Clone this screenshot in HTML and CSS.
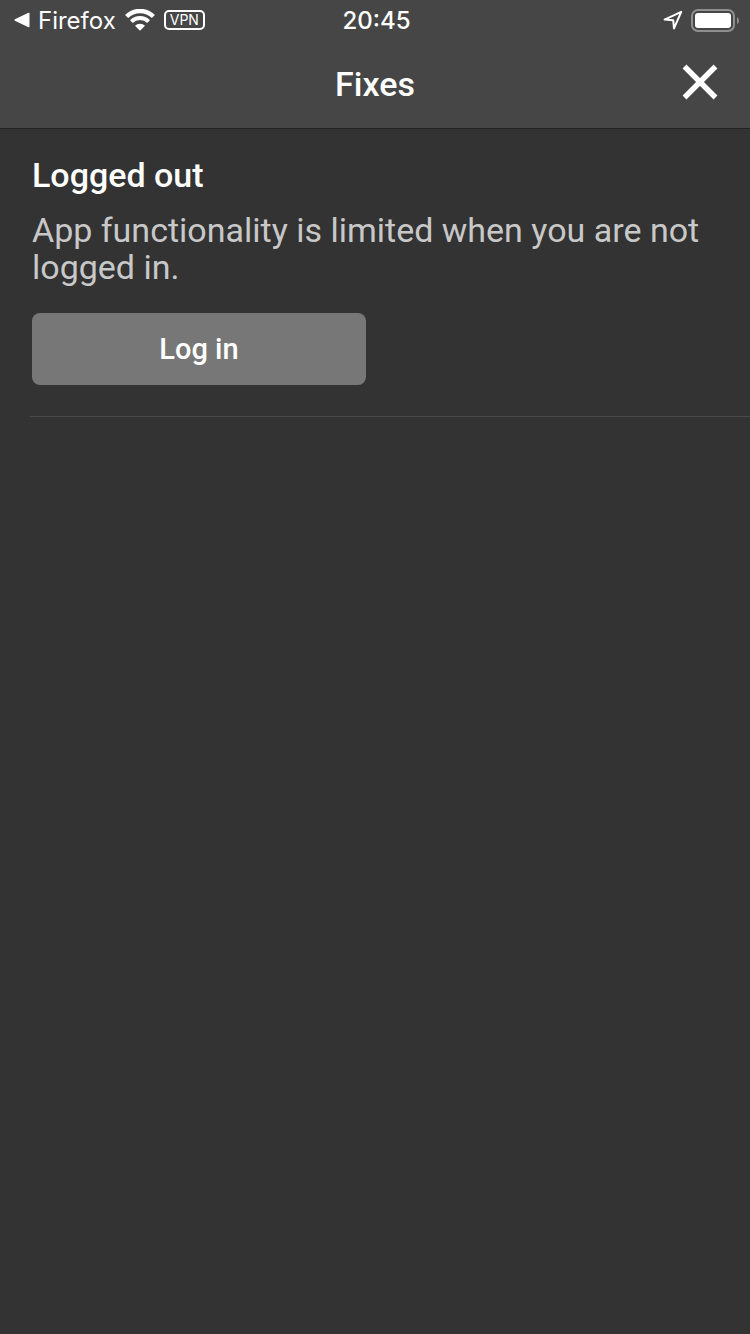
FILE: index.html
```html
<!DOCTYPE html>
<html lang="en">
<head>
  <meta charset="UTF-8">
  <meta name="viewport" content="width=device-width, initial-scale=1.0">
  <title>Fixes</title>
  <link rel="stylesheet" href="styles.css">
</head>
<body>
  <header class="top">
    <div class="status-bar">
      <div class="status-left">
        <a class="back-link" href="#">
          <svg width="16" height="16" viewBox="0 0 16 16" aria-hidden="true">
            <path d="M1.2 8 L14.8 1.4 V14.6 Z" fill="#fff" stroke="#fff" stroke-width="1.4" stroke-linejoin="round"/>
          </svg>
          <span>Firefox</span>
        </a>
        <svg width="30" height="22" viewBox="0 0 30 22" aria-hidden="true">
          <path d="M1.6 7.5 A19 19 0 0 1 28.4 7.5" fill="none" stroke="#fff" stroke-width="4.4"/>
          <path d="M6.4 12.6 A12.2 12.2 0 0 1 23.6 12.6" fill="none" stroke="#fff" stroke-width="4"/>
          <path d="M15 21.8 L10 16.8 A7 7 0 0 1 20 16.8 Z" fill="#fff"/>
        </svg>
        <span class="vpn">VPN</span>
      </div>
      <div class="clock">20:45</div>
      <div class="status-right">
        <svg width="20" height="20" viewBox="0 0 20 20" aria-hidden="true">
          <path d="M1.6 9.6 L18.2 1.8 L11 18.4 L10.2 10.2 Z" fill="none" stroke="#fff" stroke-width="2" stroke-linejoin="round"/>
        </svg>
        <svg width="48" height="23" viewBox="0 0 48 23" aria-hidden="true">
          <rect x="1" y="1" width="42" height="21" rx="6" fill="none" stroke="#8f8f8f" stroke-width="2"/>
          <rect x="4" y="4" width="36" height="15" rx="3" fill="#fff"/>
          <path d="M46 8 Q48 9 48 11.5 Q48 14 46 15 Z" fill="#8f8f8f"/>
        </svg>
      </div>
    </div>
    <div class="nav-bar">
      <h1>Fixes</h1>
      <button class="close" aria-label="Close">
        <svg width="36" height="36" viewBox="0 0 36 36" aria-hidden="true">
          <path d="M2.5 2.5 L33.5 33.5 M33.5 2.5 L2.5 33.5" stroke="#fff" stroke-width="5.4"/>
        </svg>
      </button>
    </div>
  </header>

  <main>
    <section class="fix">
      <h2>Logged out</h2>
      <p>App functionality is limited when you are not logged in.</p>
      <div class="actions">
        <button class="login">Log in</button>
      </div>
    </section>
  </main>
</body>
</html>
```
FILE: styles.css
```css
* {
  box-sizing: border-box;
}
body {
  margin: 0;
  min-height: 100vh;
  background: #333;
  color: #fff;
  font-family: Roboto, sans-serif;
}
svg {
  display: block;
}
h1, h2, p {
  margin: 0;
}
button {
  border: 0;
  color: #fff;
  font-family: inherit;
  cursor: pointer;
}
.top {
  background: #464646;
  border-bottom: 1px solid #222;
}

/* status bar */
.status-bar {
  display: grid;
  grid-template-columns: 1fr auto 1fr;
  align-items: center;
  height: 40px;
  padding: 0 11px 0 14px;
  font-family: Inter, sans-serif;
  font-size: 24px;
}
.status-left,
.status-right,
.back-link {
  display: flex;
  align-items: center;
}
.status-left {
  gap: 9px;
}
.back-link {
  gap: 8px;
  color: #fff;
  text-decoration: none;
}
.vpn {
  height: 20px;
  padding: 0 4px;
  border: 2px solid #fff;
  border-radius: 5px;
  font-size: 14px;
  line-height: 16px;
}
.clock {
  font-weight: 500;
}
.status-right {
  justify-content: flex-end;
  gap: 8px;
}

/* title bar */
.nav-bar {
  display: grid;
  grid-template-columns: 1fr auto 1fr;
  align-items: center;
  height: 88px;
  padding: 0 32px;
}
h1 {
  grid-column: 2;
  font-size: 34px;
  font-weight: 500;
}
.close {
  justify-self: end;
  padding: 0 0 4px;
  background: none;
}

/* fix item */
.fix {
  margin-left: 30px;
  padding: 28px 32px 31px 2px;
  border-bottom: 1px solid #4a4a4a;
}
h2 {
  font-size: 34px;
  font-weight: 500;
  line-height: 37px;
}
p {
  margin-top: 18px;
  color: #c8c8c8;
  font-size: 34px;
  line-height: 37px;
}
.actions {
  display: grid;
  grid-template-columns: 1fr 1fr;
  gap: 18px;
  margin-top: 27px;
}
.login {
  height: 72px;
  border-radius: 8px;
  background: #777;
  font-size: 29px;
  font-weight: 500;
}
```
